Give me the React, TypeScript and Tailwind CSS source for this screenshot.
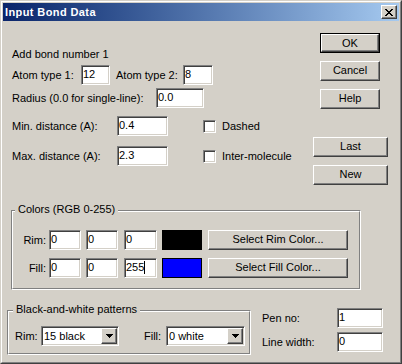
import React from "react";

const sunken =
  "border border-t-[#808080] border-l-[#808080] border-b-white border-r-white shadow-[inset_1px_1px_0_#404040,inset_-1px_-1px_0_#d4d0c8]";
const raised =
  "border border-t-white border-l-white border-b-[#404040] border-r-[#404040] shadow-[inset_-1px_-1px_0_#808080] bg-[#d4d0c8]";

function Field({ className, value, cursor }: { className: string; value: string; cursor?: boolean }) {
  return (
    <div className={`${sunken} bg-white h-[20px] pl-[1px] pt-[2px] leading-[13px] flex items-start shrink-0 ${className}`}>
      <span>{value}</span>
      {cursor && <span className="inline-block w-px h-[13px] bg-black" />}
    </div>
  );
}

function Btn({ className, children }: { className: string; children: React.ReactNode }) {
  return (
    <div className={`${raised} h-[20px] flex items-center justify-center leading-[13px] pb-[1px] shrink-0 ${className}`}>
      {children}
    </div>
  );
}

function Check() {
  return <div className={`${sunken} bg-white w-[13px] h-[13px] shrink-0`} />;
}

function Select({ className, value }: { className: string; value: string }) {
  return (
    <div className={`${sunken} bg-white h-[20px] p-[1px] flex shrink-0 ${className}`}>
      <div className="flex-1 flex items-center pl-[1px] leading-[13px]">{value}</div>
      <div className={`${raised} w-[16px] h-[16px] flex items-center justify-center`}>
        <svg width="7" height="4" viewBox="0 0 7 4" shapeRendering="crispEdges">
          <rect x="0" y="0" width="7" height="1" fill="#000" />
          <rect x="1" y="1" width="5" height="1" fill="#000" />
          <rect x="2" y="2" width="3" height="1" fill="#000" />
          <rect x="3" y="3" width="1" height="1" fill="#000" />
        </svg>
      </div>
    </div>
  );
}

function CloseX() {
  const rows = ["11000011", "01100110", "00111100", "00011000", "00111100", "01100110", "11000011"];
  return (
    <svg width="8" height="7" viewBox="0 0 8 7" shapeRendering="crispEdges">
      {rows.map((r, y) =>
        r.split("").map((c, x) => (c === "1" ? <rect key={`${x}-${y}`} x={x} y={y} width="1" height="1" fill="#000" /> : null))
      )}
    </svg>
  );
}

export default function App() {
  return (
    <div className="w-[402px] h-[364px] border border-t-[#d4d0c8] border-l-[#d4d0c8] border-b-[#404040] border-r-[#404040] font-['Liberation_Sans',Arial,sans-serif] text-[11px] text-black">
      <div className="h-full border border-t-white border-l-white border-b-[#808080] border-r-[#808080] p-[1px] bg-[#d4d0c8] flex flex-col">
        {/* Title bar */}
        <div className="h-[18px] shrink-0 flex items-center justify-between bg-linear-to-r from-[#0a246a] to-[#a6caf0]">
          <span className="pl-[2px] text-white font-bold text-[11px] tracking-[0.4px] leading-[13px]">Input Bond Data</span>
          <div className={`${raised} mr-[2px] w-[16px] h-[14px] flex items-center justify-center`}>
            <CloseX />
          </div>
        </div>

        {/* Body */}
        <div className="flex flex-col flex-1">
          {/* Top section */}
          <div className="flex h-[164px]">
            <div className="w-[310px] pl-[9px] pt-[27px] flex flex-col">
              <div className="leading-[13px]">Add bond number 1</div>
              <div className="mt-[4px] h-[20px] flex items-center leading-[13px]">
                <span className="w-[69px] shrink-0">Atom type 1:</span>
                <Field className="w-[29px]" value="12" />
                <span className="ml-[6px] w-[67px] shrink-0">Atom type 2:</span>
                <Field className="w-[30px]" value="8" />
              </div>
              <div className="mt-[3px] h-[20px] flex items-center leading-[13px]">
                <span className="w-[144px] shrink-0">Radius (0.0 for single-line):</span>
                <Field className="w-[48px]" value="0.0" />
              </div>
              <div className="mt-[8px] h-[20px] flex items-center leading-[13px]">
                <span className="w-[105px] shrink-0">Min. distance (A):</span>
                <Field className="w-[51px]" value="0.4" />
                <div className="ml-[35px]">
                  <Check />
                </div>
                <span className="ml-[6px]">Dashed</span>
              </div>
              <div className="mt-[10px] h-[20px] flex items-center leading-[13px]">
                <span className="w-[105px] shrink-0">Max. distance (A):</span>
                <Field className="w-[51px]" value="2.3" />
                <div className="ml-[35px]">
                  <Check />
                </div>
                <span className="ml-[6px]">Inter-molecule</span>
              </div>
            </div>
            <div className="w-[75px] pt-[12px] flex flex-col">
              <div className="ml-[7px] w-[60px] h-[20px] border border-black">
                <div className={`${raised} h-full flex items-center justify-center leading-[13px]`}>OK</div>
              </div>
              <Btn className="mt-[8px] ml-[7px] w-[60px]">Cancel</Btn>
              <Btn className="mt-[8px] ml-[7px] w-[60px]">Help</Btn>
              <Btn className="mt-[28px] w-[75px]">Last</Btn>
              <Btn className="mt-[8px] w-[75px]">New</Btn>
            </div>
          </div>

          {/* Colors group */}
          <div className="relative mt-[25px] ml-[8px] w-[350px] h-[80px] shrink-0 border border-t-[#808080] border-l-[#808080] border-b-white border-r-white">
            <div className="h-full border border-t-white border-l-white border-b-[#808080] border-r-[#808080] pt-[18px] pl-[6px] flex flex-col">
              <div className="h-[20px] flex items-center leading-[13px]">
                <span className="w-[27px] text-right shrink-0">Rim:</span>
                <Field className="ml-[3px] w-[32px]" value="0" />
                <Field className="ml-[5px] w-[32px]" value="0" />
                <Field className="ml-[6px] w-[33px]" value="0" />
                <div className="ml-[5px] w-[40px] h-[20px] border border-black bg-black shrink-0" />
                <Btn className="ml-[6px] w-[140px]">Select Rim Color...</Btn>
              </div>
              <div className="mt-[8px] h-[20px] flex items-center leading-[13px]">
                <span className="w-[27px] text-right shrink-0">Fill:</span>
                <Field className="ml-[3px] w-[32px]" value="0" />
                <Field className="ml-[5px] w-[32px]" value="0" />
                <Field className="ml-[6px] w-[33px]" value="255" cursor />
                <div className="ml-[5px] w-[40px] h-[20px] border border-black bg-[#0000ff] shrink-0" />
                <Btn className="ml-[6px] w-[140px]">Select Fill Color...</Btn>
              </div>
            </div>
            <span className="absolute left-[3px] top-[-8px] bg-[#d4d0c8] px-[3px] leading-[13px]">Colors (RGB 0-255)</span>
          </div>

          {/* Bottom section */}
          <div className="mt-[20px] flex items-start">
            <div className="relative ml-[4px] w-[244px] h-[45px] shrink-0 border border-t-[#808080] border-l-[#808080] border-b-white border-r-white">
              <div className="h-full border border-t-white border-l-white border-b-[#808080] border-r-[#808080] pt-[14px] pl-[6px]">
                <div className="h-[20px] flex items-center leading-[13px]">
                  <span className="w-[26px] shrink-0">Rim:</span>
                  <Select className="w-[78px]" value="15 black" />
                  <span className="ml-[25px] w-[22px] shrink-0">Fill:</span>
                  <Select className="w-[79px]" value="0 white" />
                </div>
              </div>
              <span className="absolute left-[5px] top-[-8px] bg-[#d4d0c8] px-[3px] leading-[13px]">Black-and-white patterns</span>
            </div>
            <div className="ml-[11px] mt-[-2px] flex flex-col">
              <div className="h-[20px] flex items-center leading-[13px]">
                <span className="w-[75px] shrink-0">Pen no:</span>
                <Field className="w-[46px]" value="1" />
              </div>
              <div className="mt-[4px] h-[20px] flex items-center leading-[13px]">
                <span className="w-[75px] shrink-0">Line width:</span>
                <Field className="w-[46px]" value="0" />
              </div>
            </div>
          </div>
        </div>
      </div>
    </div>
  );
}
